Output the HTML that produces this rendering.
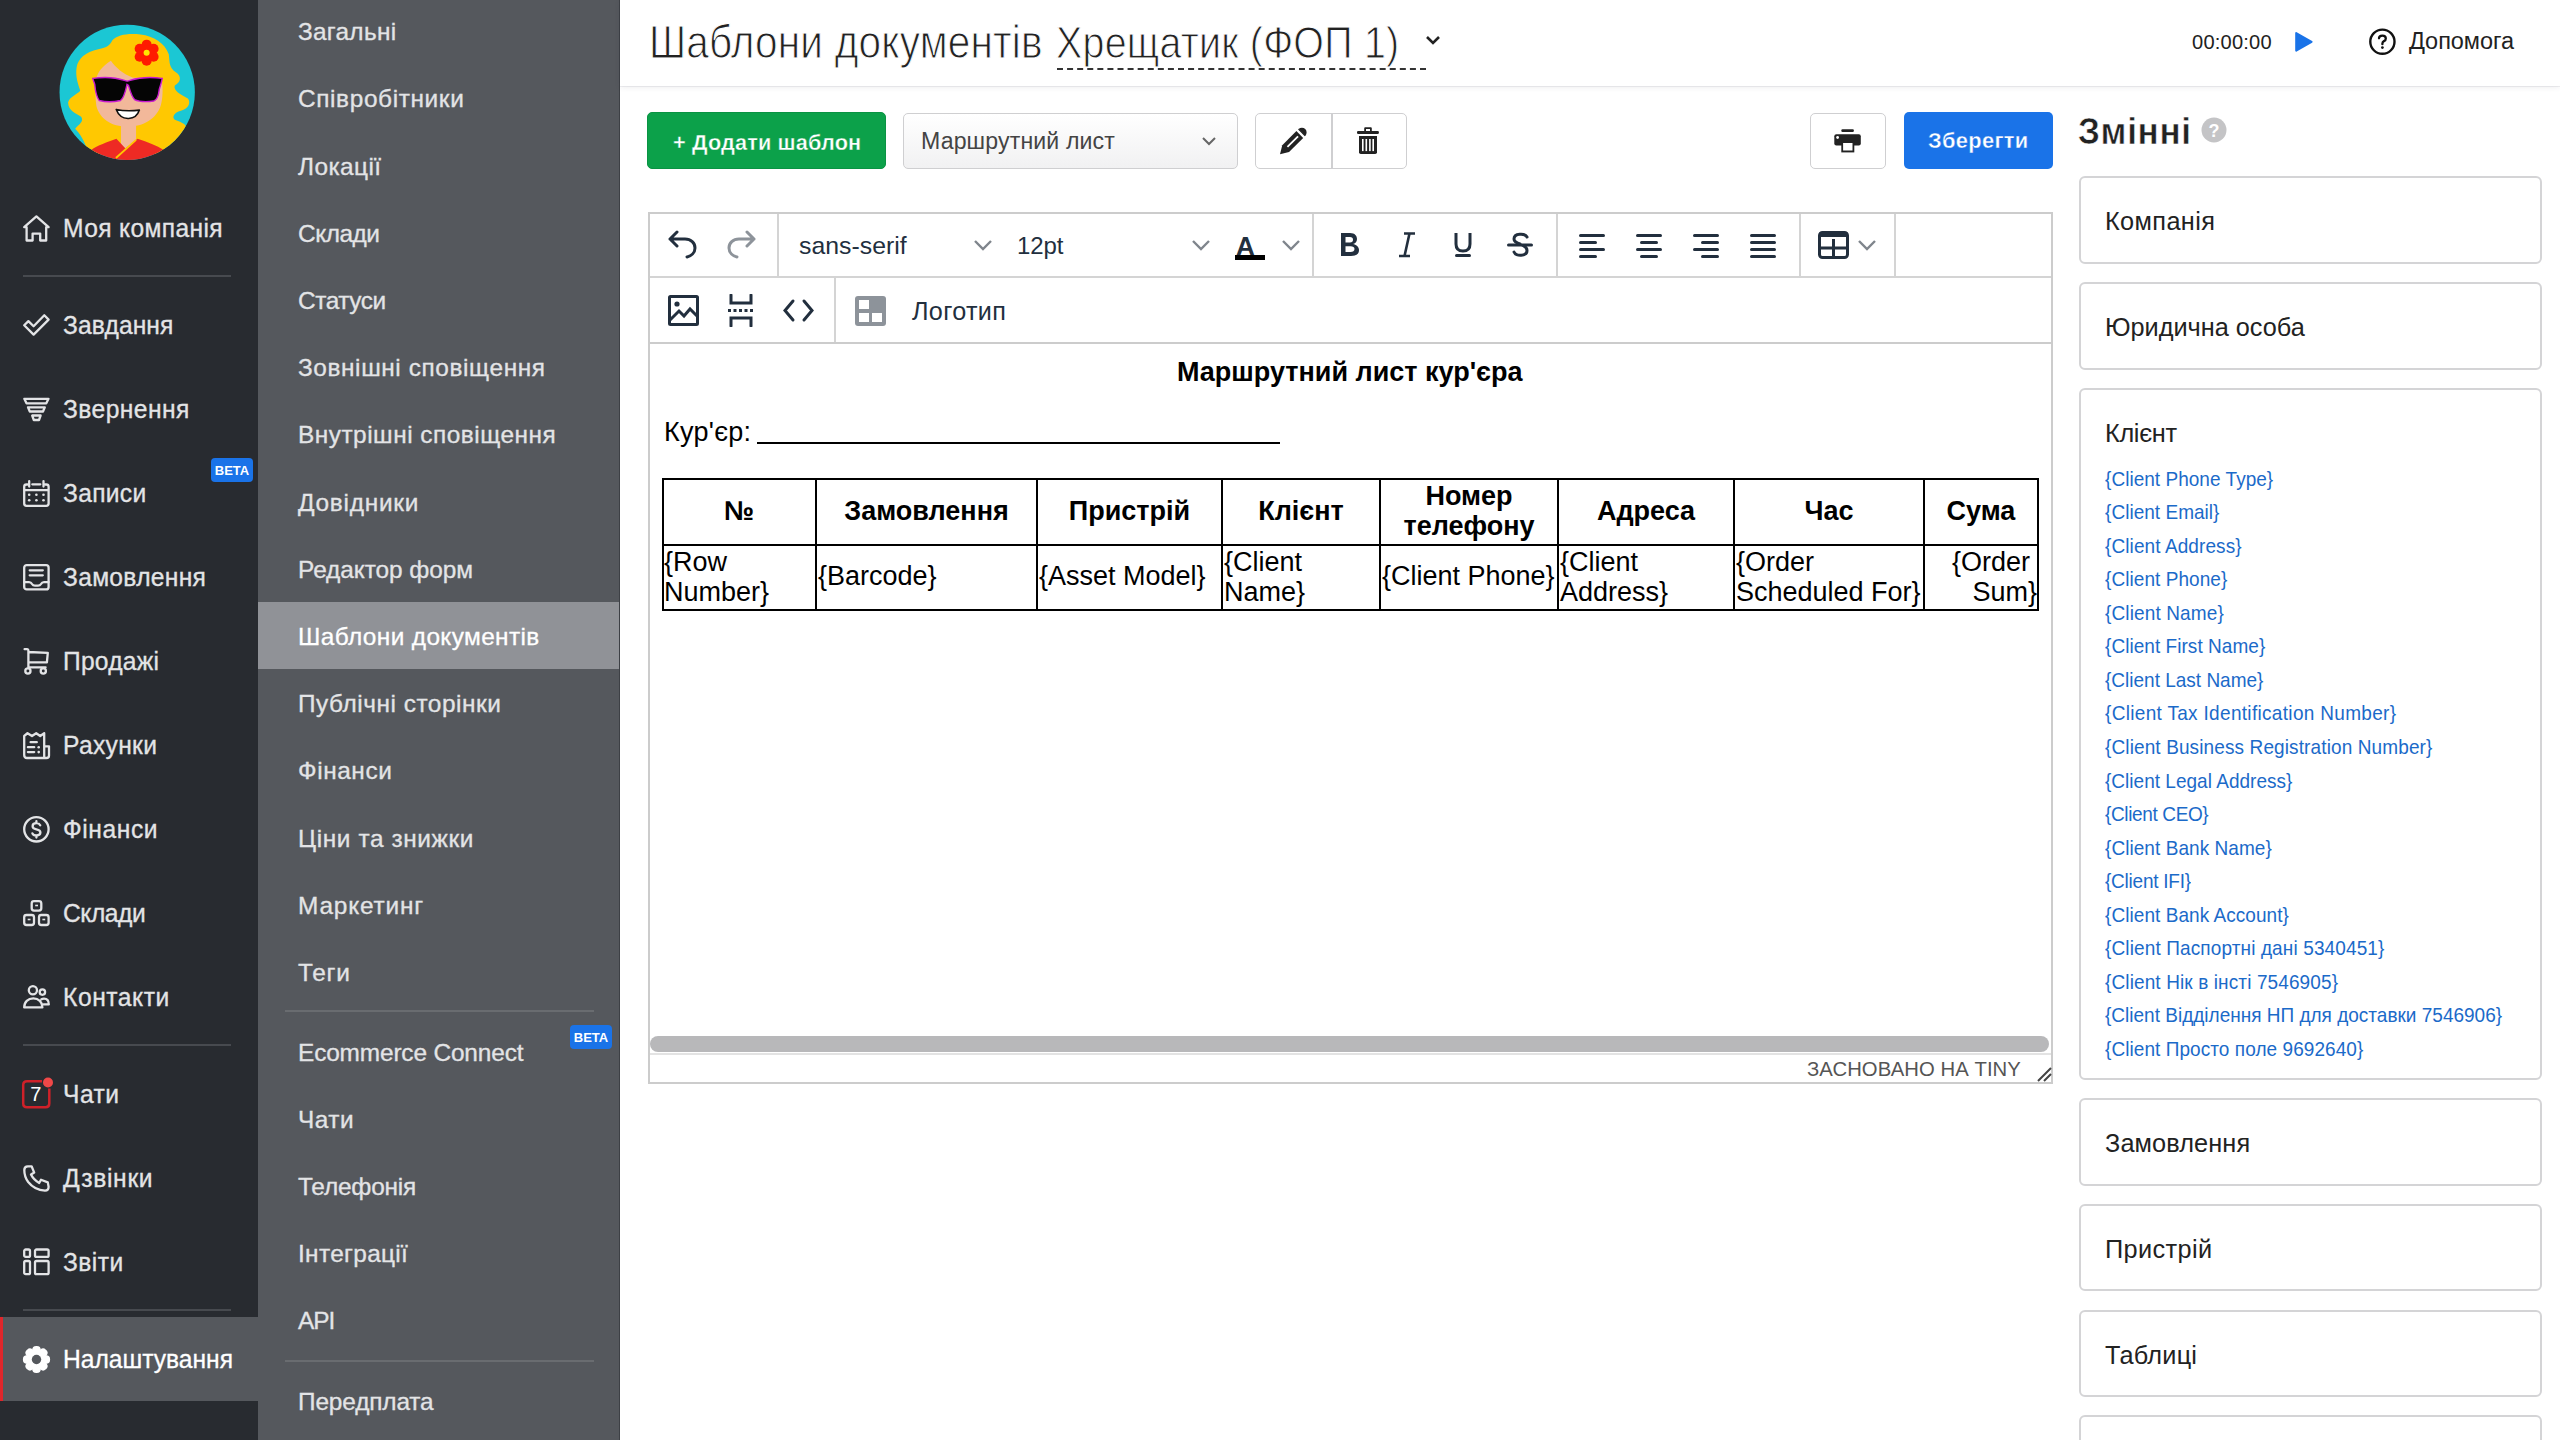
<!DOCTYPE html>
<html><head><meta charset="utf-8"><title>Шаблони документів</title><style>
*{box-sizing:border-box}
html,body{margin:0;padding:0}
body{width:2560px;height:1440px;overflow:hidden;position:relative;background:#fff;font-family:"Liberation Sans", sans-serif;}
.t{position:absolute;line-height:1;white-space:nowrap}
.a{position:absolute}
</style></head>
<body>
<div class="a" style="left:0;top:0;width:258px;height:1440px;background:#282b30"></div>
<div class="a" style="left:0;top:1317px;width:258px;height:84px;background:#55585d"></div>
<div class="a" style="left:0;top:1317px;width:3px;height:84px;background:#e0262b"></div>
<div class="a" style="left:23px;top:275px;width:208px;height:2px;background:#474a4f"></div>
<div class="a" style="left:23px;top:1044px;width:208px;height:2px;background:#474a4f"></div>
<div class="a" style="left:23px;top:1309px;width:208px;height:2px;background:#474a4f"></div>
<div class="t" style="left:63px;top:216.5px;font-size:24.6px;transform:scaleY(1.04);transform-origin:0 20.82px;color:#e3e4e6;letter-spacing:0.364px;-webkit-text-stroke:0.3px #e3e4e6;">Моя компанія</div>
<svg class="a" style="left:23px;top:214.5px;overflow:visible" width="27" height="27" viewBox="0 0 27 27"><path d="M13.4 1.4 L25.6 12.2 H23.2 V25.5 H17.2 V18.6 H9.6 V25.5 H3.6 V12.2 H1.2 Z" fill="none" stroke="#e3e4e6" stroke-width="2.3" stroke-linejoin="round" stroke-linecap="round"/></svg>
<div class="t" style="left:63px;top:314.0px;font-size:24.6px;transform:scaleY(1.04);transform-origin:0 20.82px;color:#e3e4e6;letter-spacing:0.071px;-webkit-text-stroke:0.3px #e3e4e6;">Завдання</div>
<svg class="a" style="left:23px;top:313.2px;overflow:visible" width="27" height="27" viewBox="0 0 27 27"><path d="M1.2 12.3 L5.4 8.1 L10.6 13.3 L21.3 2.3 L25.6 6.6 L10.6 21.6 Z" fill="none" stroke="#e3e4e6" stroke-width="2.3" stroke-linejoin="round" stroke-linecap="round"/></svg>
<div class="t" style="left:63px;top:398.0px;font-size:24.6px;transform:scaleY(1.04);transform-origin:0 20.82px;color:#e3e4e6;letter-spacing:0.438px;-webkit-text-stroke:0.3px #e3e4e6;">Звернення</div>
<svg class="a" style="left:23px;top:396.0px;overflow:visible" width="27" height="27" viewBox="0 0 27 27"><path d="M1.3 2.8 H25.5 L23.3 7.3 H3.5 Z M5 11.3 H21.8 L20 15.5 H6.8 Z M9.2 19.5 H17.6 L16 24 H10.8 Z" fill="none" stroke="#e3e4e6" stroke-width="2.3" stroke-linejoin="round" stroke-linecap="round"/></svg>
<div class="t" style="left:63px;top:482.0px;font-size:24.6px;transform:scaleY(1.04);transform-origin:0 20.82px;color:#e3e4e6;letter-spacing:0.3px;-webkit-text-stroke:0.3px #e3e4e6;">Записи</div>
<svg class="a" style="left:23px;top:480.0px;overflow:visible" width="27" height="27" viewBox="0 0 27 27"><path d="M4.5 4.5 H3.5 Q1.2 4.5 1.2 6.8 V23.6 Q1.2 25.8 3.5 25.8 H23.3 Q25.6 25.8 25.6 23.6 V6.8 Q25.6 4.5 23.3 4.5 H22.2 M9.3 4.3 H17.3 M1.2 10.2 H25.6 M6.2 1.2 V6.5 M20.5 1.2 V6.5" fill="none" stroke="#e3e4e6" stroke-width="2.3" stroke-linejoin="round" stroke-linecap="round"/><g fill="#e3e4e6"><circle cx="6.2" cy="14.7" r="1.3"/><circle cx="13.4" cy="14.7" r="1.3"/><circle cx="20.5" cy="14.7" r="1.3"/><circle cx="6.2" cy="20.3" r="1.3"/><circle cx="13.4" cy="20.3" r="1.3"/><circle cx="20.5" cy="20.3" r="1.3"/></g></svg>
<div class="t" style="left:63px;top:566.0px;font-size:24.6px;transform:scaleY(1.04);transform-origin:0 20.82px;color:#e3e4e6;letter-spacing:0.306px;-webkit-text-stroke:0.3px #e3e4e6;">Замовлення</div>
<svg class="a" style="left:23px;top:564.0px;overflow:visible" width="27" height="27" viewBox="0 0 27 27"><rect x="1.2" y="1.2" width="24.4" height="24.2" rx="2.5" fill="none" stroke="#e3e4e6" stroke-width="2.3" stroke-linejoin="round" stroke-linecap="round"/><path d="M1.2 18.1 H6 Q8 18.1 9 20 Q10 21.7 12 21.7 H15 Q17 21.7 18 20 Q19 18.1 21 18.1 H25.6 M6.7 6.3 H19.8 M6.7 11.3 H19.8" fill="none" stroke="#e3e4e6" stroke-width="2.3" stroke-linejoin="round" stroke-linecap="round"/></svg>
<div class="t" style="left:63px;top:650.0px;font-size:24.6px;transform:scaleY(1.04);transform-origin:0 20.82px;color:#e3e4e6;letter-spacing:0.25px;-webkit-text-stroke:0.3px #e3e4e6;">Продажі</div>
<svg class="a" style="left:23px;top:648.0px;overflow:visible" width="27" height="27" viewBox="0 0 27 27"><path d="M1.6 1.2 H4.2 Q5.4 1.2 5.4 2.6 V19.3 H22.6 M5.4 4 L24.8 4.9 L23.9 14.4 H5.4" fill="none" stroke="#e3e4e6" stroke-width="2.3" stroke-linejoin="round" stroke-linecap="round"/><circle cx="4.9" cy="23" r="2.6" fill="none" stroke="#e3e4e6" stroke-width="2.3" stroke-linejoin="round" stroke-linecap="round"/><circle cx="20.3" cy="23" r="2.6" fill="none" stroke="#e3e4e6" stroke-width="2.3" stroke-linejoin="round" stroke-linecap="round"/></svg>
<div class="t" style="left:63px;top:734.0px;font-size:24.6px;transform:scaleY(1.04);transform-origin:0 20.82px;color:#e3e4e6;letter-spacing:0.333px;-webkit-text-stroke:0.3px #e3e4e6;">Рахунки</div>
<svg class="a" style="left:23px;top:732.0px;overflow:visible" width="27" height="27" viewBox="0 0 27 27"><path d="M21.2 14.3 V1.2 L17.2 4 L13.2 1.2 L9 4 L4.5 1.2 L1.2 4 L1.2 23 Q1.2 26 4 26 H23.4 Q26 26 26 23.4 V14.3 H21.2 V25 M7.6 10.2 H13.8 M4.9 15.2 H11.2 M4.9 20.1 H11.2" fill="none" stroke="#e3e4e6" stroke-width="2.3" stroke-linejoin="round" stroke-linecap="round"/><circle cx="15.7" cy="15.2" r="1.3" fill="#e3e4e6"/><circle cx="15.7" cy="20.1" r="1.3" fill="#e3e4e6"/></svg>
<div class="t" style="left:63px;top:818.0px;font-size:24.6px;transform:scaleY(1.04);transform-origin:0 20.82px;color:#e3e4e6;letter-spacing:0.583px;-webkit-text-stroke:0.3px #e3e4e6;">Фінанси</div>
<svg class="a" style="left:23px;top:816.0px;overflow:visible" width="27" height="27" viewBox="0 0 27 27"><circle cx="13.4" cy="13.3" r="12.2" fill="none" stroke="#e3e4e6" stroke-width="2.3" stroke-linejoin="round" stroke-linecap="round"/><path d="M17.2 9.2 C16.4 7.6 14.8 7.2 13.4 7.2 C11.2 7.2 9.6 8.4 9.6 10.2 C9.6 12.3 11.6 12.9 13.4 13.3 C15.4 13.7 17.4 14.4 17.4 16.6 C17.4 18.4 15.6 19.5 13.4 19.5 C11.6 19.5 10 19 9.4 17.4 M13.4 5.2 V7.2 M13.4 19.5 V21.5" fill="none" stroke="#e3e4e6" stroke-width="2.3" stroke-linejoin="round" stroke-linecap="round"/></svg>
<div class="t" style="left:63px;top:902.0px;font-size:24.6px;transform:scaleY(1.04);transform-origin:0 20.82px;color:#e3e4e6;letter-spacing:-0.45px;-webkit-text-stroke:0.3px #e3e4e6;">Склади</div>
<svg class="a" style="left:23px;top:900.0px;overflow:visible" width="27" height="27" viewBox="0 0 27 27"><rect x="8.7" y="1.2" width="9.6" height="9.4" rx="2.3" fill="none" stroke="#e3e4e6" stroke-width="2.3" stroke-linejoin="round" stroke-linecap="round"/><rect x="1.2" y="15" width="9.8" height="10" rx="2.3" fill="none" stroke="#e3e4e6" stroke-width="2.3" stroke-linejoin="round" stroke-linecap="round"/><rect x="16" y="15" width="9.6" height="10" rx="2.3" fill="none" stroke="#e3e4e6" stroke-width="2.3" stroke-linejoin="round" stroke-linecap="round"/><rect x="12.2" y="4.7" width="2.8" height="1.6" fill="#e3e4e6"/><rect x="4.7" y="18.7" width="2.8" height="1.6" fill="#e3e4e6"/><rect x="19.4" y="18.7" width="2.8" height="1.6" fill="#e3e4e6"/></svg>
<div class="t" style="left:63px;top:986.0px;font-size:24.6px;transform:scaleY(1.04);transform-origin:0 20.82px;color:#e3e4e6;letter-spacing:0.571px;-webkit-text-stroke:0.3px #e3e4e6;">Контакти</div>
<svg class="a" style="left:23px;top:984.0px;overflow:visible" width="27" height="27" viewBox="0 0 27 27"><circle cx="9.9" cy="6.2" r="4.1" fill="none" stroke="#e3e4e6" stroke-width="2.3" stroke-linejoin="round" stroke-linecap="round"/><circle cx="19.4" cy="8.1" r="2.7" fill="none" stroke="#e3e4e6" stroke-width="2.3" stroke-linejoin="round" stroke-linecap="round"/><path d="M1.2 23.4 C1.2 18 5 14.4 10.3 14.4 C15.6 14.4 19.4 18 19.4 23.4 Z M18.4 15.3 C19.2 14.8 20 14.6 21 14.6 C24 14.6 25.8 17 25.8 20.4 H20.5" fill="none" stroke="#e3e4e6" stroke-width="2.3" stroke-linejoin="round" stroke-linecap="round"/></svg>
<div class="t" style="left:63px;top:1083.0px;font-size:24.6px;transform:scaleY(1.04);transform-origin:0 20.82px;color:#e3e4e6;letter-spacing:0.5px;-webkit-text-stroke:0.3px #e3e4e6;">Чати</div>
<svg class="a" style="left:23px;top:1081.0px;overflow:visible" width="27" height="27" viewBox="0 0 27 27"><path d="M19 0.2 H4 Q0.2 0.2 0.2 4 V22.6 Q0.2 26.3 4 26.3 H22.6 Q26.3 26.3 26.3 22.6 V7.5" fill="none" stroke="#cf2129" stroke-width="2.5"/><text x="12.9" y="20.3" font-family="Liberation Sans" font-size="20" fill="#fff" text-anchor="middle">7</text><circle cx="25" cy="1.5" r="5" fill="#f04848"/></svg>
<div class="t" style="left:63px;top:1167.0px;font-size:24.6px;transform:scaleY(1.04);transform-origin:0 20.82px;color:#e3e4e6;letter-spacing:0.708px;-webkit-text-stroke:0.3px #e3e4e6;">Дзвінки</div>
<svg class="a" style="left:23px;top:1165.0px;overflow:visible" width="27" height="27" viewBox="0 0 27 27"><path d="M4.8 1.3 H8.6 L11.2 7.6 L8 9.6 Q10.5 14.8 16.2 18 L18 14.8 L24.8 17.4 L25.6 21.8 Q25.6 25.6 22 25.6 Q11.5 25 5.2 17 Q1.3 11.8 1.3 5 Q1.3 1.3 4.8 1.3 Z" fill="none" stroke="#e3e4e6" stroke-width="2.3" stroke-linejoin="round" stroke-linecap="round"/></svg>
<div class="t" style="left:63px;top:1251.0px;font-size:24.6px;transform:scaleY(1.04);transform-origin:0 20.82px;color:#e3e4e6;letter-spacing:0.438px;-webkit-text-stroke:0.3px #e3e4e6;">Звіти</div>
<svg class="a" style="left:23px;top:1249.0px;overflow:visible" width="27" height="27" viewBox="0 0 27 27"><rect x="1.2" y="0.5" width="5.8" height="7.4" rx="1.5" fill="none" stroke="#e3e4e6" stroke-width="2.3" stroke-linejoin="round" stroke-linecap="round"/><rect x="12" y="0.5" width="13.6" height="7.4" rx="1.5" fill="none" stroke="#e3e4e6" stroke-width="2.3" stroke-linejoin="round" stroke-linecap="round"/><rect x="1.2" y="12" width="5.8" height="13.2" rx="1.5" fill="none" stroke="#e3e4e6" stroke-width="2.3" stroke-linejoin="round" stroke-linecap="round"/><rect x="12" y="12" width="13.6" height="13.2" rx="1.5" fill="none" stroke="#e3e4e6" stroke-width="2.3" stroke-linejoin="round" stroke-linecap="round"/></svg>
<div class="t" style="left:63px;top:1348.0px;font-size:24.6px;transform:scaleY(1.04);transform-origin:0 20.82px;color:#ffffff;-webkit-text-stroke:0.3px #ffffff;">Налаштування</div>
<svg class="a" style="left:23px;top:1346.0px;overflow:visible" width="27" height="27" viewBox="0 0 27 27"><g fill="#ffffff" transform="translate(13.5 13.5)"><circle r="10.6"/><g id="tt"><rect x="-4.3" y="-13.6" width="8.6" height="9" rx="4"/><rect x="-4.3" y="4.6" width="8.6" height="9" rx="4"/></g><use href="#tt" transform="rotate(45)"/><use href="#tt" transform="rotate(90)"/><use href="#tt" transform="rotate(135)"/></g><circle cx="13.5" cy="13.5" r="4.7" fill="#55585d"/></svg>
<div class="a" style="left:211px;top:458px;width:42px;height:24px;background:#1a73e8;border-radius:4px;color:#fff;font-size:13px;font-weight:700;line-height:26px;text-align:center;letter-spacing:0">BETA</div>
<svg class="a" style="left:55px;top:20px" width="145" height="145" viewBox="0 0 1440 1440">
<defs><clipPath id="cc"><circle cx="717" cy="718" r="672"/></clipPath></defs>
<g clip-path="url(#cc)">
<rect width="1440" height="1440" fill="#1bc7d4"/>
<path d="M330 1330 C300 1200 240 1120 200 1080 C240 1030 290 1010 260 960 C210 930 130 900 130 820 C140 760 240 730 250 700 C230 640 200 560 215 470 C230 380 300 320 430 290 C520 270 545 250 570 200 C620 150 720 130 850 145 C980 160 1090 230 1130 340 C1140 420 1130 470 1200 520 C1260 560 1250 620 1190 650 C1170 700 1250 740 1320 780 C1350 820 1330 880 1250 900 C1180 920 1160 960 1190 990 C1240 1010 1300 1030 1300 1060 C1200 1200 1150 1280 1080 1330 Z" fill="#ffc801"/>
<path d="M405 600 C420 520 470 460 555 405 C600 470 680 540 770 570 L1060 590 C1075 680 1070 780 1050 850 C1010 980 880 1060 720 1060 C560 1060 440 980 410 850 C400 770 398 680 405 600 Z" fill="#f2b89a"/>
<path d="M655 980 H805 V1300 H655 Z" fill="#f2b89a"/>
<path d="M360 1290 C420 1250 520 1210 610 1180 L700 1275 L820 1180 C920 1210 1010 1250 1080 1290 L1100 1440 H340 Z" fill="#ee2a24"/>
<path d="M605 1370 L805 1190" stroke="#ffc801" stroke-width="18"/>
<path d="M375 580 C480 565 600 570 690 600 C710 610 725 610 745 600 C840 570 950 565 1065 580 C1060 620 1045 650 1035 690 C1030 740 1020 790 980 805 C900 815 830 810 790 790 C760 760 745 700 730 650 L715 640 C700 700 690 770 650 800 C580 815 500 815 440 800 C410 760 400 700 395 640 C390 620 380 600 375 580 Z" fill="#050505" stroke="#c81ad0" stroke-width="14"/>
<path d="M608 888 C680 905 760 905 838 895 C820 950 780 980 725 978 C670 976 630 945 608 888 Z" fill="#ffffff" stroke="#111" stroke-width="16" stroke-linejoin="round"/>
<g transform="translate(910 325)" fill="#ff1a00"><circle cx="0" cy="-80" r="50"/><circle cx="69" cy="-40" r="50"/><circle cx="69" cy="40" r="50"/><circle cx="0" cy="80" r="50"/><circle cx="-69" cy="40" r="50"/><circle cx="-69" cy="-40" r="50"/><circle r="75"/><circle r="30" fill="#ffe600"/></g>
</g></svg>
<div class="a" style="left:258px;top:0;width:362px;height:1440px;background:#55585d;border-right:1px solid #3d4045"></div>
<div class="a" style="left:258px;top:602px;width:361px;height:67px;background:#909297"></div>
<div class="a" style="left:285px;top:1010px;width:309px;height:2px;background:#696c70"></div>
<div class="a" style="left:285px;top:1360px;width:309px;height:2px;background:#696c70"></div>
<div class="t" style="left:298px;top:20.1px;font-size:24.4px;color:#e3e4e6;letter-spacing:0.286px;-webkit-text-stroke:0.3px #e3e4e6;">Загальні</div>
<div class="t" style="left:298px;top:87.3px;font-size:24.4px;color:#e3e4e6;letter-spacing:0.625px;-webkit-text-stroke:0.3px #e3e4e6;">Співробітники</div>
<div class="t" style="left:298px;top:154.5px;font-size:24.4px;color:#e3e4e6;letter-spacing:0.417px;-webkit-text-stroke:0.3px #e3e4e6;">Локації</div>
<div class="t" style="left:298px;top:221.7px;font-size:24.4px;color:#e3e4e6;letter-spacing:-0.45px;-webkit-text-stroke:0.3px #e3e4e6;">Склади</div>
<div class="t" style="left:298px;top:288.9px;font-size:24.4px;color:#e3e4e6;letter-spacing:-0.417px;-webkit-text-stroke:0.3px #e3e4e6;">Статуси</div>
<div class="t" style="left:298px;top:356.1px;font-size:24.4px;color:#e3e4e6;letter-spacing:0.597px;-webkit-text-stroke:0.3px #e3e4e6;">Зовнішні сповіщення</div>
<div class="t" style="left:298px;top:423.3px;font-size:24.4px;color:#e3e4e6;letter-spacing:0.5px;-webkit-text-stroke:0.3px #e3e4e6;">Внутрішні сповіщення</div>
<div class="t" style="left:298px;top:490.5px;font-size:24.4px;color:#e3e4e6;letter-spacing:0.75px;-webkit-text-stroke:0.3px #e3e4e6;">Довідники</div>
<div class="t" style="left:298px;top:557.7px;font-size:24.4px;color:#e3e4e6;letter-spacing:-0.062px;-webkit-text-stroke:0.3px #e3e4e6;">Редактор форм</div>
<div class="t" style="left:298px;top:624.9px;font-size:24.4px;color:#ffffff;letter-spacing:0.382px;-webkit-text-stroke:0.3px #ffffff;">Шаблони документів</div>
<div class="t" style="left:298px;top:692.1px;font-size:24.4px;color:#e3e4e6;letter-spacing:0.531px;-webkit-text-stroke:0.3px #e3e4e6;">Публічні сторінки</div>
<div class="t" style="left:298px;top:759.3px;font-size:24.4px;color:#e3e4e6;letter-spacing:0.583px;-webkit-text-stroke:0.3px #e3e4e6;">Фінанси</div>
<div class="t" style="left:298px;top:826.5px;font-size:24.4px;color:#e3e4e6;letter-spacing:0.615px;-webkit-text-stroke:0.3px #e3e4e6;">Ціни та знижки</div>
<div class="t" style="left:298px;top:893.7px;font-size:24.4px;color:#e3e4e6;letter-spacing:0.812px;-webkit-text-stroke:0.3px #e3e4e6;">Маркетинг</div>
<div class="t" style="left:298px;top:960.9px;font-size:24.4px;color:#e3e4e6;letter-spacing:0.75px;-webkit-text-stroke:0.3px #e3e4e6;">Теги</div>
<div class="t" style="left:298px;top:1040.6px;font-size:24.4px;color:#e3e4e6;letter-spacing:-0.141px;-webkit-text-stroke:0.3px #e3e4e6;">Ecommerce Connect</div>
<div class="t" style="left:298px;top:1107.8px;font-size:24.4px;color:#e3e4e6;letter-spacing:0.5px;-webkit-text-stroke:0.3px #e3e4e6;">Чати</div>
<div class="t" style="left:298px;top:1175.0px;font-size:24.4px;color:#e3e4e6;letter-spacing:-0.188px;-webkit-text-stroke:0.3px #e3e4e6;">Телефонія</div>
<div class="t" style="left:298px;top:1242.2px;font-size:24.4px;color:#e3e4e6;letter-spacing:0.333px;-webkit-text-stroke:0.3px #e3e4e6;">Інтеграції</div>
<div class="t" style="left:298px;top:1309.4px;font-size:24.4px;color:#e3e4e6;letter-spacing:-1.0px;-webkit-text-stroke:0.3px #e3e4e6;">API</div>
<div class="t" style="left:298px;top:1389.9px;font-size:24.4px;color:#e3e4e6;letter-spacing:-0.139px;-webkit-text-stroke:0.3px #e3e4e6;">Передплата</div>
<div class="a" style="left:570px;top:1025px;width:42px;height:24px;background:#1a73e8;border-radius:4px;color:#fff;font-size:13px;font-weight:700;line-height:26px;text-align:center;letter-spacing:0">BETA</div>
<div class="a" style="left:620px;top:0;width:1940px;height:86px;background:#fff;box-shadow:0 1px 0 rgba(40,40,70,0.07),0 1px 6px rgba(40,40,70,0.09)"></div>
<div class="t" style="left:649px;top:23.6px;font-size:40.5px;transform:scaleY(1.12);transform-origin:0 34.28px;color:#222;font-weight:400;letter-spacing:0.224px;-webkit-text-stroke:0.9px #fff;">Шаблони документів</div>
<div class="t" style="left:1056px;top:24.5px;font-size:39.4px;transform:scaleY(1.12);transform-origin:0 33.35px;color:#222;font-weight:400;letter-spacing:0.226px;-webkit-text-stroke:0.9px #fff;">Хрещатик (ФОП 1)</div>
<div class="a" style="left:1057px;top:68px;width:369px;height:0;border-top:2px dashed #333"></div>
<svg class="a" style="left:1424px;top:34px" width="18" height="13" viewBox="0 0 18 13"><path d="M3 3 L9 9 L15 3" fill="none" stroke="#222" stroke-width="2.6"/></svg>
<div class="t" style="left:2192px;top:31.8px;font-size:20.1px;color:#222;letter-spacing:0.2px;">00:00:00</div>
<svg class="a" style="left:2290px;top:28px" width="30" height="28" viewBox="2290 28 30 28"><path d="M2296.2 33 L2311.6 41.8 L2296.2 50.6 Z" fill="#1a73e8" stroke="#1a73e8" stroke-width="2" stroke-linejoin="round"/></svg>
<svg class="a" style="left:2366px;top:26px" width="34" height="32" viewBox="2366 26 34 32"><circle cx="2382.4" cy="41.7" r="12.1" fill="none" stroke="#111" stroke-width="2.4"/><path d="M2379 38.3 Q2379 35.6 2382.4 35.6 Q2385.8 35.6 2385.8 38.4 Q2385.8 40.2 2384 41.1 Q2382.4 42 2382.4 43.6 V44.2" fill="none" stroke="#111" stroke-width="2.3" stroke-linecap="round" stroke-linejoin="round"/><circle cx="2382.4" cy="47.6" r="1.4" fill="#111"/></svg>
<div class="t" style="left:2409px;top:30.4px;font-size:23.5px;color:#222;letter-spacing:-0.057px;">Допомога</div>
<div class="a" style="left:647px;top:112px;width:239px;height:57px;background:#0ca14a;border-radius:5px;border:1px solid #0a9343"></div>
<div class="t" style="left:673px;top:131.8px;font-size:21.7px;color:#fff;font-weight:700;letter-spacing:0.157px;-webkit-text-stroke:0.35px #0ca14a;">+ Додати шаблон</div>
<div class="a" style="left:903px;top:113px;width:335px;height:56px;border:1.5px solid #cfcfd1;border-radius:5px;background:linear-gradient(#ffffff,#f1f1f2)"></div>
<div class="t" style="left:921px;top:129.9px;font-size:23.1px;color:#444;letter-spacing:0.143px;">Маршрутний лист</div>
<svg class="a" style="left:1200px;top:134px" width="18" height="14" viewBox="0 0 18 14"><path d="M3 4 L9 10 L15 4" fill="none" stroke="#666" stroke-width="2"/></svg>
<div class="a" style="left:1255px;top:113px;width:152px;height:56px;border:1.5px solid #cfcfd1;border-radius:5px;background:#fff"></div>
<div class="a" style="left:1331px;top:113px;width:1.5px;height:56px;background:#cfcfd1"></div>
<svg class="a" style="left:1270px;top:120px" width="45" height="40" viewBox="1270 120 45 40"><g transform="translate(1280 154.3) rotate(-45)" fill="#222"><path d="M0 0 L8 -4.8 H28 V4.8 H8 Z"/><rect x="10.5" y="-0.9" width="15" height="1.8" fill="#fff"/><path d="M30.4 -4.7 A4.7 4.7 0 0 1 30.4 4.7 Z" transform="translate(0.6 0)"/><rect x="30.3" y="-4.7" width="1.2" height="9.4"/></g></svg>
<svg class="a" style="left:1350px;top:120px" width="40" height="40" viewBox="1350 120 40 40"><rect x="1357" y="130.9" width="21.9" height="3.1" rx="1.2" fill="#222"/><path d="M1364.2 131.5 V128.3 Q1364.2 127.3 1365.2 127.3 H1370.8 Q1371.8 127.3 1371.8 128.3 V131.5 H1370 V129 H1366 V131.5 Z" fill="#222"/><path d="M1359 136 H1377 V152.3 Q1377 154.1 1375.2 154.1 H1360.8 Q1359 154.1 1359 152.3 Z" fill="#222"/><g fill="#fff"><rect x="1362" y="139" width="1.6" height="12.1"/><rect x="1365.5" y="139" width="1.6" height="12.1"/><rect x="1369.1" y="139" width="1.6" height="12.1"/><rect x="1372.4" y="139" width="1.6" height="12.1"/></g></svg>
<div class="a" style="left:1810px;top:113px;width:76px;height:56px;border:1.5px solid #cfcfd1;border-radius:5px;background:#fff"></div>
<svg class="a" style="left:1830px;top:125px" width="35" height="32" viewBox="1830 125 35 32"><rect x="1841.3" y="129.3" width="12.6" height="2.6" rx="1.2" fill="#222"/><path d="M1836.3 134.3 H1858.8 Q1860.8 134.3 1860.8 136.3 V143.5 Q1860.8 145.5 1858.8 145.5 H1836.3 Q1834.3 145.5 1834.3 143.5 V136.3 Q1834.3 134.3 1836.3 134.3 Z" fill="#222"/><circle cx="1837.6" cy="137.5" r="1.4" fill="#fff"/><rect x="1841.3" y="141.3" width="13" height="11.1" fill="#222"/><rect x="1843.1" y="143" width="9.4" height="7.5" fill="#fff"/></svg>
<div class="a" style="left:1904px;top:112px;width:149px;height:57px;background:#1a73e8;border-radius:5px"></div>
<div class="t" style="left:1928px;top:130.2px;font-size:21.8px;color:#fff;font-weight:700;letter-spacing:0.343px;-webkit-text-stroke:0.35px #1a73e8;">Зберегти</div>
<div class="a" style="left:648px;top:212px;width:1405px;height:872px;border:2px solid #ccc;background:#fff"></div>
<div class="a" style="left:650px;top:276px;width:1401px;height:2px;background:#d4d4d4"></div>
<div class="a" style="left:650px;top:342px;width:1401px;height:2px;background:#ccc"></div>
<div class="a" style="left:777px;top:214px;width:2px;height:62px;background:#d4d4d4"></div>
<div class="a" style="left:1312px;top:214px;width:2px;height:62px;background:#d4d4d4"></div>
<div class="a" style="left:1556px;top:214px;width:2px;height:62px;background:#d4d4d4"></div>
<div class="a" style="left:1799px;top:214px;width:2px;height:62px;background:#d4d4d4"></div>
<div class="a" style="left:1894px;top:214px;width:2px;height:62px;background:#d4d4d4"></div>
<div class="a" style="left:834px;top:278px;width:2px;height:64px;background:#d4d4d4"></div>
<svg class="a" style="left:667px;top:228px" width="32" height="32" viewBox="0 0 32 32"><path d="M10 4 L3 11 L10 18 M3 11 H18 C24 11 28 15 28 20 C28 25 24 28 20 29" fill="none" stroke="#222f3e" stroke-width="3" stroke-linecap="round" stroke-linejoin="round"/></svg>
<svg class="a" style="left:725px;top:228px" width="32" height="32" viewBox="0 0 32 32"><path d="M22 4 L29 11 L22 18 M29 11 H14 C8 11 4 15 4 20 C4 25 8 28 12 29" fill="none" stroke="#8d939a" stroke-width="3" stroke-linecap="round" stroke-linejoin="round"/></svg>
<div class="t" style="left:799px;top:233.7px;font-size:24.8px;color:#222f3e;letter-spacing:0.023px;">sans-serif</div>
<svg class="a" style="left:973px;top:239px" width="20" height="12" viewBox="0 0 20 12"><path d="M2 2 L10 10 L18 2" fill="none" stroke="#7f858c" stroke-width="2.4"/></svg>
<div class="t" style="left:1017px;top:234.4px;font-size:24px;color:#222f3e;letter-spacing:-0.133px;">12pt</div>
<svg class="a" style="left:1191px;top:239px" width="20" height="12" viewBox="0 0 20 12"><path d="M2 2 L10 10 L18 2" fill="none" stroke="#7f858c" stroke-width="2.4"/></svg>
<div class="t" style="left:1236px;top:232.5px;font-size:26px;color:#222f3e;font-weight:700;">A</div>
<div class="a" style="left:1235px;top:255px;width:30px;height:5px;background:#000"></div>
<svg class="a" style="left:1281px;top:239px" width="20" height="12" viewBox="0 0 20 12"><path d="M2 2 L10 10 L18 2" fill="none" stroke="#7f858c" stroke-width="2.4"/></svg>
<svg class="a" style="left:1335px;top:228px" width="30" height="32" viewBox="0 0 30 32"><path d="M6 5 H15 C20 5 22 8 22 11 C22 14 20 15.5 18 16 C21 16.5 24 18.5 24 22 C24 26 21 28 16 28 H6 Z M10.5 9 V14.5 H15 C17 14.5 18 13.5 18 11.8 C18 10 17 9 15 9 Z M10.5 18.2 V24 H15.5 C18 24 19.5 23 19.5 21 C19.5 19 18 18.2 15.5 18.2 Z" fill="#222f3e" fill-rule="evenodd"/></svg>
<svg class="a" style="left:1395px;top:228px" width="24" height="32" viewBox="0 0 24 32"><path d="M9 5.5 H20 M4 28 H15 M14.5 5.5 L9.5 28" fill="none" stroke="#222f3e" stroke-width="2.6"/></svg>
<svg class="a" style="left:1450px;top:228px" width="26" height="32" viewBox="0 0 26 32"><path d="M6 5 V16 C6 21 9 23 13 23 C17 23 20 21 20 16 V5" fill="none" stroke="#222f3e" stroke-width="3"/><rect x="5" y="26" width="16" height="3" rx="1.5" fill="#222f3e"/></svg>
<svg class="a" style="left:1505px;top:228px" width="30" height="32" viewBox="0 0 30 32"><path d="M22 9 C20 5 9 5 9 11 C9 14 12 15 15 16 M18 17.5 C21 19 22 20 22 22.5 C22 28.5 11 28.5 9 24" fill="none" stroke="#222f3e" stroke-width="3" stroke-linecap="round"/><rect x="2" y="15.5" width="26" height="3" rx="1.5" fill="#222f3e"/></svg>
<svg class="a" style="left:1579px;top:229px" width="27" height="32" viewBox="0 0 27 32"><rect x="0" y="5" width="26" height="3" rx="1.5" fill="#222f3e"/><rect x="0" y="12" width="18" height="3" rx="1.5" fill="#222f3e"/><rect x="0" y="19" width="26" height="3" rx="1.5" fill="#222f3e"/><rect x="0" y="26" width="18" height="3" rx="1.5" fill="#222f3e"/></svg>
<svg class="a" style="left:1636px;top:229px" width="27" height="32" viewBox="0 0 27 32"><rect x="0" y="5" width="26" height="3" rx="1.5" fill="#222f3e"/><rect x="4" y="12" width="18" height="3" rx="1.5" fill="#222f3e"/><rect x="0" y="19" width="26" height="3" rx="1.5" fill="#222f3e"/><rect x="4" y="26" width="18" height="3" rx="1.5" fill="#222f3e"/></svg>
<svg class="a" style="left:1693px;top:229px" width="27" height="32" viewBox="0 0 27 32"><rect x="0" y="5" width="26" height="3" rx="1.5" fill="#222f3e"/><rect x="8" y="12" width="18" height="3" rx="1.5" fill="#222f3e"/><rect x="0" y="19" width="26" height="3" rx="1.5" fill="#222f3e"/><rect x="8" y="26" width="18" height="3" rx="1.5" fill="#222f3e"/></svg>
<svg class="a" style="left:1750px;top:229px" width="27" height="32" viewBox="0 0 27 32"><rect x="0" y="5" width="26" height="3" rx="1.5" fill="#222f3e"/><rect x="0" y="12" width="26" height="3" rx="1.5" fill="#222f3e"/><rect x="0" y="19" width="26" height="3" rx="1.5" fill="#222f3e"/><rect x="0" y="26" width="26" height="3" rx="1.5" fill="#222f3e"/></svg>
<svg class="a" style="left:1818px;top:231px" width="31" height="28" viewBox="0 0 31 28"><rect x="1.5" y="1.5" width="28" height="25" rx="3" fill="none" stroke="#222f3e" stroke-width="3"/><rect x="1.5" y="1.5" width="28" height="4.5" fill="#222f3e"/><path d="M15.5 8 V26 M1.5 17 H29.5" stroke="#222f3e" stroke-width="3"/></svg>
<svg class="a" style="left:1857px;top:239px" width="20" height="12" viewBox="0 0 20 12"><path d="M2 2 L10 10 L18 2" fill="none" stroke="#7f858c" stroke-width="2.4"/></svg>
<svg class="a" style="left:668px;top:295px" width="32" height="31" viewBox="0 0 32 31"><rect x="1.5" y="1.5" width="28" height="28" rx="1" fill="none" stroke="#222f3e" stroke-width="3"/><circle cx="9" cy="9" r="2.6" fill="#222f3e"/><path d="M2 25 L11 16 L16 21 L22 14 L30 22" fill="none" stroke="#222f3e" stroke-width="3"/></svg>
<svg class="a" style="left:727px;top:294px" width="29" height="33" viewBox="0 0 29 33"><path d="M4 1 V9 H24 V1 M4 32 V24 H24 V32" fill="none" stroke="#222f3e" stroke-width="3" stroke-linecap="round"/><path d="M1 16.5 H28" stroke="#222f3e" stroke-width="2.8" stroke-dasharray="3 2.5"/></svg>
<svg class="a" style="left:783px;top:298px" width="31" height="25" viewBox="0 0 31 25"><path d="M10 3 L2 12.5 L10 22 M21 3 L29 12.5 L21 22" fill="none" stroke="#222f3e" stroke-width="3" stroke-linecap="round"/></svg>
<svg class="a" style="left:855px;top:296px" width="31" height="30" viewBox="0 0 31 30"><rect x="0" y="0" width="31" height="30" rx="3" fill="#8d939a"/><rect x="4" y="4" width="10" height="9" fill="#fff"/><rect x="4" y="17" width="10" height="9" fill="#fff"/><rect x="17" y="17" width="10" height="9" fill="#fff"/></svg>
<div class="t" style="left:912px;top:298.7px;font-size:25.2px;color:#222f3e;letter-spacing:0.334px;">Логотип</div>
<div class="t" style="left:1177px;top:358.7px;font-size:27px;color:#000;font-weight:700;">Маршрутний лист кур'єра</div>
<div class="t" style="left:664px;top:418.9px;font-size:27px;color:#000;letter-spacing:0.267px;">Кур'єр:</div>
<div class="a" style="left:757px;top:442px;width:523px;height:2px;background:#000"></div>
<div class="a" style="left:662px;top:478px;width:1377px;height:133px;border:2px solid #000"></div>
<div class="a" style="left:662px;top:543.5px;width:1377px;height:2px;background:#000"></div>
<div class="a" style="left:815px;top:478px;width:2px;height:133px;background:#000"></div>
<div class="a" style="left:1036px;top:478px;width:2px;height:133px;background:#000"></div>
<div class="a" style="left:1221px;top:478px;width:2px;height:133px;background:#000"></div>
<div class="a" style="left:1379px;top:478px;width:2px;height:133px;background:#000"></div>
<div class="a" style="left:1557px;top:478px;width:2px;height:133px;background:#000"></div>
<div class="a" style="left:1733px;top:478px;width:2px;height:133px;background:#000"></div>
<div class="a" style="left:1923px;top:478px;width:2px;height:133px;background:#000"></div>
<div class="t" style="left:662px;top:498.1px;width:154px;text-align:center;font-size:27px;font-weight:700;color:#000">№</div>
<div class="t" style="left:816px;top:498.1px;width:221px;text-align:center;font-size:27px;font-weight:700;color:#000">Замовлення</div>
<div class="t" style="left:1037px;top:498.1px;width:185px;text-align:center;font-size:27px;font-weight:700;color:#000">Пристрій</div>
<div class="t" style="left:1222px;top:498.1px;width:158px;text-align:center;font-size:27px;font-weight:700;color:#000">Клієнт</div>
<div class="t" style="left:1380px;top:481.1px;width:178px;text-align:center;font-size:27px;font-weight:700;line-height:30px;color:#000">Номер<br>телефону</div>
<div class="t" style="left:1558px;top:498.1px;width:176px;text-align:center;font-size:27px;font-weight:700;color:#000">Адреса</div>
<div class="t" style="left:1734px;top:498.1px;width:190px;text-align:center;font-size:27px;font-weight:700;color:#000">Час</div>
<div class="t" style="left:1924px;top:498.1px;width:114px;text-align:center;font-size:27px;font-weight:700;color:#000">Сума</div>
<div class="t" style="left:664px;top:547.2px;width:151px;text-align:left;font-size:27px;line-height:30px;color:#000">{Row<br>Number}</div>
<div class="t" style="left:818px;top:563.3px;width:218px;text-align:left;font-size:27px;color:#000">{Barcode}</div>
<div class="t" style="left:1039px;top:563.3px;width:182px;text-align:left;font-size:27px;color:#000">{Asset Model}</div>
<div class="t" style="left:1224px;top:547.2px;width:155px;text-align:left;font-size:27px;line-height:30px;color:#000">{Client<br>Name}</div>
<div class="t" style="left:1382px;top:563.3px;width:175px;text-align:left;font-size:27px;color:#000">{Client Phone}</div>
<div class="t" style="left:1560px;top:547.2px;width:173px;text-align:left;font-size:27px;line-height:30px;color:#000">{Client<br>Address}</div>
<div class="t" style="left:1736px;top:547.2px;width:187px;text-align:left;font-size:27px;line-height:30px;color:#000">{Order<br>Scheduled For}</div>
<div class="t" style="left:1926px;top:547.2px;width:111px;text-align:right;font-size:27px;line-height:30px;color:#000"><span style="padding-right:7px">{Order</span><br>Sum}</div>
<div class="a" style="left:650px;top:1036px;width:1399px;height:16px;background:#b8b8ba;border-radius:8px"></div>
<div class="a" style="left:650px;top:1053px;width:1401px;height:1.5px;background:#e3e3e3"></div>
<div class="t" style="left:1807px;top:1058.6px;font-size:20.3px;color:#555;letter-spacing:0.062px;">ЗАСНОВАНО НА TINY</div>
<svg class="a" style="left:2036px;top:1066px" width="16" height="16" viewBox="0 0 16 16"><path d="M2 15 L15 2 M8 15 L15 8" stroke="#444" stroke-width="2"/></svg>
<div class="t" style="left:2078px;top:114.2px;font-size:35px;transform:scaleY(1.04);transform-origin:0 29.63px;color:#222;font-weight:700;letter-spacing:0.68px;-webkit-text-stroke:0.5px #fff;">Змінні</div>
<svg class="a" style="left:2201px;top:117px" width="26" height="26" viewBox="0 0 26 26"><circle cx="13" cy="13" r="12.5" fill="#c4c4c6"/><text x="13" y="20" font-family="Liberation Sans" font-weight="700" font-size="18" text-anchor="middle" fill="#fff">?</text></svg>
<div class="a" style="left:2079px;top:176px;width:463px;height:88px;border:2px solid #d4d4d6;border-radius:6px;background:#fff"></div>
<div class="t" style="left:2105px;top:209.1px;font-size:25.3px;color:#222;letter-spacing:0.371px;">Компанія</div>
<div class="a" style="left:2079px;top:282px;width:463px;height:88px;border:2px solid #d4d4d6;border-radius:6px;background:#fff"></div>
<div class="t" style="left:2105px;top:315.1px;font-size:25.3px;color:#222;letter-spacing:-0.015px;">Юридична особа</div>
<div class="a" style="left:2079px;top:1098px;width:463px;height:88px;border:2px solid #d4d4d6;border-radius:6px;background:#fff"></div>
<div class="t" style="left:2105px;top:1131.1px;font-size:25.3px;color:#222;letter-spacing:0.111px;">Замовлення</div>
<div class="a" style="left:2079px;top:1204px;width:463px;height:87px;border:2px solid #d4d4d6;border-radius:6px;background:#fff"></div>
<div class="t" style="left:2105px;top:1236.6px;font-size:25.3px;color:#222;letter-spacing:0.371px;">Пристрій</div>
<div class="a" style="left:2079px;top:1310px;width:463px;height:87px;border:2px solid #d4d4d6;border-radius:6px;background:#fff"></div>
<div class="t" style="left:2105px;top:1342.6px;font-size:25.3px;color:#222;letter-spacing:0.2px;">Таблиці</div>
<div class="a" style="left:2079px;top:388px;width:463px;height:692px;border:2px solid #d4d4d6;border-radius:6px;background:#fff"></div>
<div class="a" style="left:2079px;top:1415px;width:463px;height:85px;border:2px solid #d4d4d6;border-radius:6px;background:#fff"></div>
<div class="t" style="left:2105px;top:420.6px;font-size:25.3px;color:#222;letter-spacing:-0.32px;">Клієнт</div>
<div class="t" style="left:2105px;top:469.5px;font-size:19px;transform:scaleY(1.1);transform-origin:0 16.08px;color:#1b6ac9;letter-spacing:0.033px;">{Client Phone Type}</div>
<div class="t" style="left:2105px;top:503.1px;font-size:19px;transform:scaleY(1.1);transform-origin:0 16.08px;color:#1b6ac9;letter-spacing:0.03px;">{Client Email}</div>
<div class="t" style="left:2105px;top:536.6px;font-size:19px;transform:scaleY(1.1);transform-origin:0 16.08px;color:#1b6ac9;letter-spacing:0.093px;">{Client Address}</div>
<div class="t" style="left:2105px;top:570.2px;font-size:19px;transform:scaleY(1.1);transform-origin:0 16.08px;color:#1b6ac9;letter-spacing:0.061px;">{Client Phone}</div>
<div class="t" style="left:2105px;top:603.7px;font-size:19px;transform:scaleY(1.1);transform-origin:0 16.08px;color:#1b6ac9;letter-spacing:0.133px;">{Client Name}</div>
<div class="t" style="left:2105px;top:637.3px;font-size:19px;transform:scaleY(1.1);transform-origin:0 16.08px;color:#1b6ac9;letter-spacing:0.045px;">{Client First Name}</div>
<div class="t" style="left:2105px;top:670.8px;font-size:19px;transform:scaleY(1.1);transform-origin:0 16.08px;color:#1b6ac9;">{Client Last Name}</div>
<div class="t" style="left:2105px;top:704.4px;font-size:19px;transform:scaleY(1.1);transform-origin:0 16.08px;color:#1b6ac9;letter-spacing:0.318px;">{Client Tax Identification Number}</div>
<div class="t" style="left:2105px;top:737.9px;font-size:19px;transform:scaleY(1.1);transform-origin:0 16.08px;color:#1b6ac9;letter-spacing:0.117px;">{Client Business Registration Number}</div>
<div class="t" style="left:2105px;top:771.5px;font-size:19px;transform:scaleY(1.1);transform-origin:0 16.08px;color:#1b6ac9;letter-spacing:0.019px;">{Client Legal Address}</div>
<div class="t" style="left:2105px;top:805.0px;font-size:19px;transform:scaleY(1.1);transform-origin:0 16.08px;color:#1b6ac9;letter-spacing:-0.364px;">{Client CEO}</div>
<div class="t" style="left:2105px;top:838.6px;font-size:19px;transform:scaleY(1.1);transform-origin:0 16.08px;color:#1b6ac9;letter-spacing:0.058px;">{Client Bank Name}</div>
<div class="t" style="left:2105px;top:872.1px;font-size:19px;transform:scaleY(1.1);transform-origin:0 16.08px;color:#1b6ac9;letter-spacing:-0.237px;">{Client IFI}</div>
<div class="t" style="left:2105px;top:905.7px;font-size:19px;transform:scaleY(1.1);transform-origin:0 16.08px;color:#1b6ac9;letter-spacing:0.06px;">{Client Bank Account}</div>
<div class="t" style="left:2105px;top:939.2px;font-size:19px;transform:scaleY(1.1);transform-origin:0 16.08px;color:#1b6ac9;letter-spacing:0.127px;">{Client Паспортні дані 5340451}</div>
<div class="t" style="left:2105px;top:972.8px;font-size:19px;transform:scaleY(1.1);transform-origin:0 16.08px;color:#1b6ac9;letter-spacing:0.118px;">{Client Нік в інсті 7546905}</div>
<div class="t" style="left:2105px;top:1006.3px;font-size:19px;transform:scaleY(1.1);transform-origin:0 16.08px;color:#1b6ac9;letter-spacing:0.004px;">{Client Відділення НП для доставки 7546906}</div>
<div class="t" style="left:2105px;top:1039.9px;font-size:19px;transform:scaleY(1.1);transform-origin:0 16.08px;color:#1b6ac9;letter-spacing:0.067px;">{Client Просто поле 9692640}</div>
</body></html>
